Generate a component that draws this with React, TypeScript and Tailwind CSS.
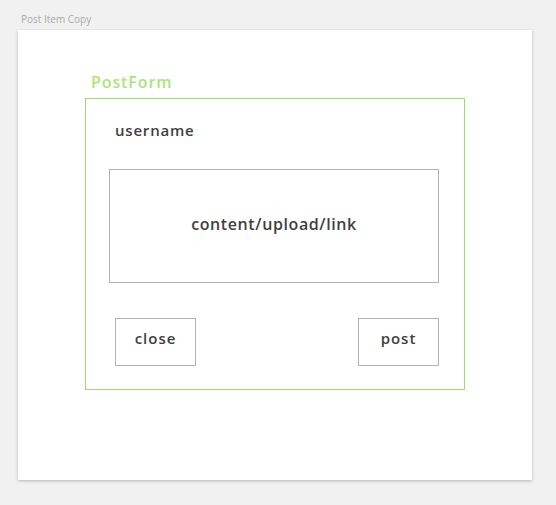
const font = { fontFamily: "'Open Sans', 'Liberation Sans', sans-serif" };

export default function App() {
  return (
    <div className="w-[556px] h-[505px] bg-[#f1f1f1] pt-[12px] pl-[18px]" style={font}>
      <div className="text-[10px] leading-[14px] text-[#a9a9a9] pl-[3px] h-[18px]">Post Item Copy</div>
      <div className="w-[514px] h-[450px] bg-white shadow-[0_1px_3px_rgba(0,0,0,0.25)] pl-[67px] pt-[42px]">
        <div className="text-[16px] leading-[20px] font-semibold tracking-[0.9px] text-[#ade37f] pl-[6px] h-[26px]">PostForm</div>
        <div className="w-[380px] h-[292px] border border-[#9edd6b] pl-[23px] pt-[20px]">
          <div className="text-[15px] leading-[22px] font-semibold tracking-[0.8px] text-[#3f3f3f] pl-[6px]">username</div>
          <div className="mt-[28px] w-[330px] h-[114px] border border-[#b3b3b3] flex items-center justify-center text-[16px] font-semibold tracking-[0.6px] text-[#3f3f3f] pb-[5px]">
            content/upload/link
          </div>
          <div className="mt-[35px] w-[330px] flex justify-between pl-[6px]">
            <div className="w-[81px] h-[48px] border border-[#b3b3b3] flex justify-center pt-[8px] text-[15px] leading-[22px] font-semibold tracking-[1px] text-[#3f3f3f]">close</div>
            <div className="w-[81px] h-[48px] border border-[#b3b3b3] flex justify-center pt-[8px] text-[15px] leading-[22px] font-semibold tracking-[1px] text-[#3f3f3f]">post</div>
          </div>
        </div>
      </div>
    </div>
  );
}
